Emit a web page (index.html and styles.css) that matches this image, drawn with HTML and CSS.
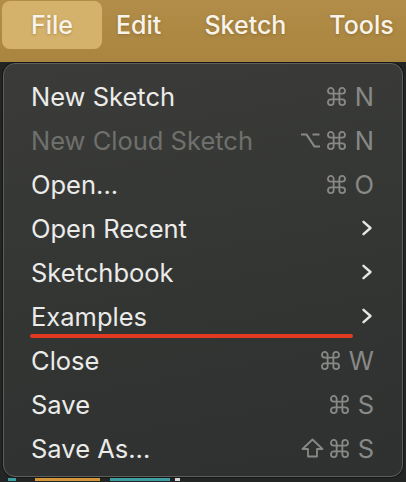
FILE: index.html
```html
<!DOCTYPE html>
<html>
<head>
<meta charset="utf-8">
<link rel="stylesheet" href="styles.css">
</head>
<body>
<div class="menubar">
  <span class="mb-item active">File</span>
  <span class="mb-item">Edit</span>
  <span class="mb-item">Sketch</span>
  <span class="mb-item">Tools</span>
</div>
<div class="stage">
  <div class="panel">
    <div class="row"><span class="label">New Sketch</span><span class="key"><svg class="cmd" width="19" height="19" viewBox="0 0 20 20"><path d="M7 7V4A3 3 0 1 0 4 7H16A3 3 0 1 0 13 4V16A3 3 0 1 0 16 13H4A3 3 0 1 0 7 16V7"/></svg><span class="ch">N</span></span></div>
    <div class="row disabled"><span class="label">New Cloud Sketch</span><span class="key"><svg class="opt" width="21" height="19" viewBox="0 0 21 19"><path d="M1 3.5h5.5l8 12h5.5M12.5 3.5h7"/></svg><svg class="cmd" width="19" height="19" viewBox="0 0 20 20"><path d="M7 7V4A3 3 0 1 0 4 7H16A3 3 0 1 0 13 4V16A3 3 0 1 0 16 13H4A3 3 0 1 0 7 16V7"/></svg><span class="ch">N</span></span></div>
    <div class="row"><span class="label">Open...</span><span class="key"><svg class="cmd" width="19" height="19" viewBox="0 0 20 20"><path d="M7 7V4A3 3 0 1 0 4 7H16A3 3 0 1 0 13 4V16A3 3 0 1 0 16 13H4A3 3 0 1 0 7 16V7"/></svg><span class="ch">O</span></span></div>
    <div class="row"><span class="label">Open Recent</span><svg class="chev" width="12" height="16" viewBox="0 0 12 16"><path d="M2.5 1.8 L9.5 8 L2.5 14.2"/></svg></div>
    <div class="row"><span class="label">Sketchbook</span><svg class="chev" width="12" height="16" viewBox="0 0 12 16"><path d="M2.5 1.8 L9.5 8 L2.5 14.2"/></svg></div>
    <div class="row"><span class="label">Examples</span><svg class="chev" width="12" height="16" viewBox="0 0 12 16"><path d="M2.5 1.8 L9.5 8 L2.5 14.2"/></svg></div>
    <div class="row"><span class="label">Close</span><span class="key"><svg class="cmd" width="19" height="19" viewBox="0 0 20 20"><path d="M7 7V4A3 3 0 1 0 4 7H16A3 3 0 1 0 13 4V16A3 3 0 1 0 16 13H4A3 3 0 1 0 7 16V7"/></svg><span class="ch">W</span></span></div>
    <div class="row"><span class="label">Save</span><span class="key"><svg class="cmd" width="19" height="19" viewBox="0 0 20 20"><path d="M7 7V4A3 3 0 1 0 4 7H16A3 3 0 1 0 13 4V16A3 3 0 1 0 16 13H4A3 3 0 1 0 7 16V7"/></svg><span class="ch">S</span></span></div>
    <div class="row"><span class="label">Save As...</span><span class="key"><svg class="shift" width="23" height="20" viewBox="0 0 23 20"><path d="M11.5 1.5L21.5 11h-5.5v7.5h-9V11H1.5z"/></svg><svg class="cmd" width="19" height="19" viewBox="0 0 20 20"><path d="M7 7V4A3 3 0 1 0 4 7H16A3 3 0 1 0 13 4V16A3 3 0 1 0 16 13H4A3 3 0 1 0 7 16V7"/></svg><span class="ch">S</span></span></div>
    <div class="underline"></div>
  </div>
  <div class="code">
    <span class="c teal w8"></span><span class="c orange w65"></span><span class="c teal w60"></span><span class="c white w5"></span>
  </div>
</div>
</body>
</html>
```

FILE: styles.css
```css
html, body {
  margin: 0;
  padding: 0;
}
body {
  width: 406px;
  height: 482px;
  overflow: hidden;
  background: #232524;
  font-family: Inter, "Noto Sans", "Liberation Sans", sans-serif;
}
.menubar {
  height: 62px;
  box-sizing: border-box;
  display: flex;
  align-items: flex-start;
  gap: 43px;
  padding-left: 31px;
  background: linear-gradient(#b18d49, #a9853f);
}
.mb-item {
  margin-top: 1px;
  height: 48px;
  line-height: 49px;
  font-size: 25px;
  font-weight: 500;
  color: #f7f3ea;
  text-shadow: 0 1px 3px rgba(90, 60, 10, 0.35);
}
.mb-item.active {
  margin-left: -29px;
  margin-right: -29px;
  padding: 0 29px;
  background: #d5b26c;
  border-radius: 8px;
}
.stage {
  padding-left: 3px;
  padding-top: 1px;
}
.panel {
  position: relative;
  width: 400px;
  height: 414px;
  box-sizing: border-box;
  border: 1px solid #5e5f5b;
  border-radius: 12px;
  background: linear-gradient(170deg, #3b3c39 0%, #333533 55%, #2f3131 100%);
  box-shadow: 0 0 0 1px #151615;
  padding: 10px 28px 6px 27px;
}
.row {
  height: 44px;
  display: flex;
  align-items: center;
  justify-content: space-between;
  font-size: 25.5px;
  color: #ebebe9;
}
.row.disabled .label {
  color: #6f706d;
}
.key {
  display: flex;
  align-items: center;
  color: #888986;
}
.key svg path {
  fill: none;
  stroke: #888986;
  stroke-width: 1.9;
  stroke-linecap: round;
  stroke-linejoin: round;
}
.key .opt path {
  stroke-width: 2.2;
  stroke-linecap: butt;
  stroke-linejoin: miter;
}
.key .shift path {
  stroke-width: 1.8;
}
.opt, .shift {
  margin-right: 6px;
}
.ch {
  margin-left: 9px;
}
.chev {
  margin-right: 1px;
}
.chev path {
  fill: none;
  stroke: #e6e6e4;
  stroke-width: 2.4;
  stroke-linecap: round;
  stroke-linejoin: round;
}
.underline {
  position: absolute;
  left: 26px;
  top: 270px;
  width: 323px;
  height: 4px;
  border-radius: 2px;
  background: #e03b22;
}
.code {
  display: flex;
  padding-top: 1px;
}
.c {
  height: 3px;
}
.teal { background: #3d9fa3; }
.orange { background: #d4963a; }
.white { background: #d8d8d8; }
.w8 { width: 8px; margin-left: 5px; }
.w65 { width: 65px; margin-left: 19px; }
.w60 { width: 60px; margin-left: 10px; }
.w5 { width: 5px; margin-left: 5px; }
```
